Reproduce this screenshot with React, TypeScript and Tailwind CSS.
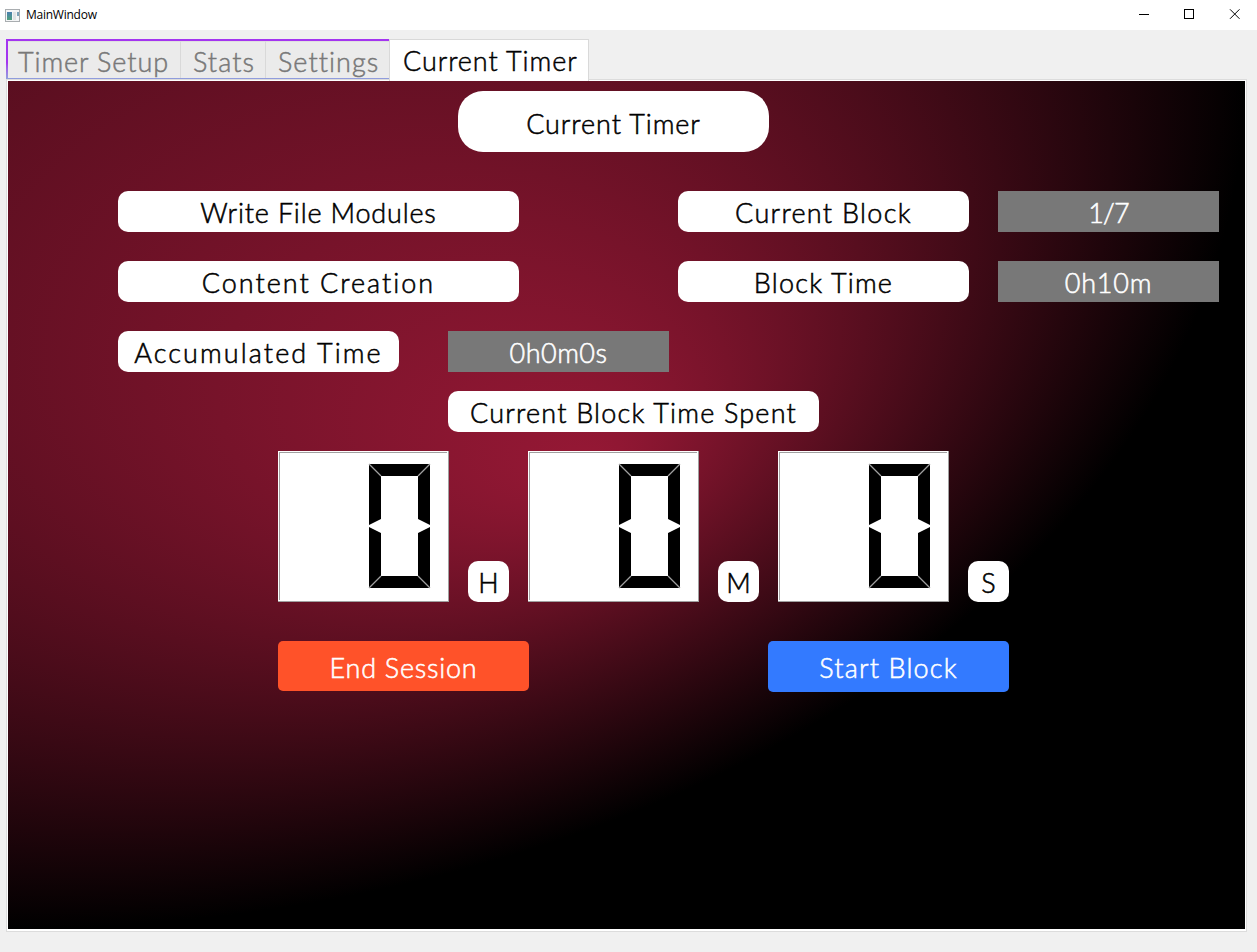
import React from "react";

const lines = "flex shrink-0 items-center justify-center whitespace-nowrap";
const card = `${lines} h-[41px] rounded-[10px] bg-white pt-[3px] text-black`;
const value = `${lines} h-[41px] w-[221px] bg-[#787878] pt-[3px] text-white`;
const tab = "h-[37px] border-t border-[#e0e0e0] pt-[4px] whitespace-nowrap";

function AppIcon() {
  return (
    <svg width="15" height="13" viewBox="0 0 15 13" className="ml-[5px]" shapeRendering="crispEdges">
      <defs>
        <linearGradient id="pane" x1="0" y1="0" x2="0" y2="1">
          <stop offset="0" stopColor="#4a7fb0" />
          <stop offset="1" stopColor="#4fa07c" />
        </linearGradient>
      </defs>
      <rect width="15" height="13" fill="#a9adb0" />
      <rect x="1" y="1" width="13" height="11" fill="#f4f5f6" />
      <rect x="2" y="3" width="5" height="8" fill="url(#pane)" />
      <rect x="8" y="3" width="3" height="8" fill="#dfe2e4" />
      <rect x="12" y="3" width="2" height="4" fill="#7da3b8" />
    </svg>
  );
}

function Lcd() {
  return (
    <div className="h-[151px] w-[171px] shrink-0 bg-white">
      <svg width="171" height="151" viewBox="0 0 171 151" className="block">
        <path d="M1.5 149V1.5H169" fill="none" stroke="#a0a0a0" shapeRendering="crispEdges" />
        <path d="M0 150.5H170.5V0" fill="none" stroke="#a0a0a0" shapeRendering="crispEdges" />
        <path
          d="M91 13H152V74L140 68V25H103V68L91 74ZM91 76L103 82V125H140V82L152 76V137H91Z"
          fill="#000"
        />
        <path
          d="M91 13L103 25M152 13L140 25M91 137L103 125M152 137L140 125"
          stroke="#a0a0a0"
          strokeWidth="1.3"
        />
      </svg>
    </div>
  );
}

function Glow() {
  return (
    <svg className="absolute inset-0 h-full w-full" viewBox="0 0 1237 848" preserveAspectRatio="none">
      <defs>
        <radialGradient id="glow" cx="0" cy="0" r="1" fx="0.475" fy="0.46">
          <stop offset="0" stopColor="#961835" />
          <stop offset="1" stopColor="#000" />
        </radialGradient>
      </defs>
      <rect width="1237" height="848" fill="url(#glow)" />
    </svg>
  );
}

function TitleBar() {
  return (
    <header className="flex h-[30px] shrink-0 items-center bg-white text-black">
      <div className="flex h-[27px] items-center">
        <AppIcon />
      </div>
      <span className="ml-[6px] font-['Open_Sans',sans-serif] text-[12px] tracking-[-0.25px]">MainWindow</span>
      <svg width="101" height="11" viewBox="0 0 101 11" className="mr-[17px] mb-[2px] ml-auto" fill="none" stroke="#000">
        <path d="M0 5.5H10" shapeRendering="crispEdges" />
        <rect x="45.5" y="0.5" width="9" height="9" shapeRendering="crispEdges" />
        <path d="M91 0.3L100.5 9.8M100.5 0.3L91 9.8" />
      </svg>
    </header>
  );
}

function Tabs() {
  return (
    <nav className="ml-[6px] mt-[9px] flex h-[40px] w-[1241px] shrink-0 items-stretch font-light [-webkit-text-stroke:0.5px]">
      <div className="flex w-[383px] bg-linear-to-b from-[#a435f0] from-60% to-[#8f9fdc] pt-[2px] pb-px pl-[2px] text-[#787878]">
        <div className="flex w-[381px] bg-[#ebebeb]">
          <div className={`${tab} w-[173px] border-r border-r-[#d9d9d9] pl-[10px] tracking-[0.9px]`}>Timer Setup</div>
          <div className={`${tab} w-[85px] border-r border-r-[#d9d9d9] pl-[12px] tracking-[1.05px]`}>Stats</div>
          <div className={`${tab} w-[123px] pl-[12px] tracking-[1.05px]`}>Settings</div>
        </div>
      </div>
      <div className="z-10 h-[42px] w-[200px] border border-b-0 border-[#d9d9d9] bg-white pl-[13px] pt-[5px] tracking-[0.92px] whitespace-nowrap text-black">
        Current Timer
      </div>
    </nav>
  );
}

export default function App() {
  return (
    <div className="flex h-[952px] w-[1257px] flex-col overflow-hidden bg-[#f0f0f0] font-['Lato',sans-serif] text-[27px] leading-[1.15]">
      <TitleBar />
      <Tabs />
      <main className="ml-[6px] h-[853px] w-[1241px] border border-[#dcdcdc] bg-white px-px pt-px pb-[2px]">
        <div className="relative h-[848px] w-[1237px]">
          <Glow />
          <div className="relative flex flex-col pt-[10px] font-light [-webkit-text-stroke:0.55px]">
            <h1 className={`${lines} ml-[450px] h-[61px] w-[311px] rounded-[25px] bg-white pt-[4px] font-light tracking-[0.92px] text-black`}>
              Current Timer
            </h1>
            <div className="mt-[39px] ml-[110px] flex">
              <div className={`${card} w-[401px] tracking-[0.82px]`}>Write File Modules</div>
              <div className={`${card} ml-[159px] w-[291px] tracking-[1.3px]`}>Current Block</div>
              <div className={`${value} ml-[29px] tracking-[-0.9px]`}>1/7</div>
            </div>
            <div className="mt-[29px] ml-[110px] flex">
              <div className={`${card} w-[401px] tracking-[2px]`}>Content Creation</div>
              <div className={`${card} ml-[159px] w-[291px] tracking-[1.2px]`}>Block Time</div>
              <div className={`${value} ml-[29px] tracking-[0.8px]`}>0h10m</div>
            </div>
            <div className="mt-[29px] ml-[110px] flex">
              <div className={`${card} w-[281px] tracking-[2.1px]`}>Accumulated Time</div>
              <div className={`${value} ml-[49px] tracking-[0.5px]`}>0h0m0s</div>
            </div>
            <div className={`${card} mt-[19px] ml-[440px] w-[371px] tracking-[1.2px]`}>Current Block Time Spent</div>
            <div className="mt-[19px] ml-[270px] flex items-end gap-[19px]">
              <Lcd />
              <div className={`${card} w-[41px]`}>H</div>
              <Lcd />
              <div className={`${card} w-[41px]`}>M</div>
              <Lcd />
              <div className={`${card} w-[41px]`}>S</div>
            </div>
            <div className="mt-[39px] ml-[270px] flex items-start gap-[239px] text-white">
              <button className={`${lines} h-[50px] w-[251px] rounded-[5px] bg-[#ff5229] pt-[4px] tracking-[0.75px]`}>
                End Session
              </button>
              <button className={`${lines} h-[51px] w-[241px] rounded-[5px] bg-[#337aff] pt-[3px] tracking-[1.15px]`}>
                Start Block
              </button>
            </div>
          </div>
        </div>
      </main>
    </div>
  );
}
